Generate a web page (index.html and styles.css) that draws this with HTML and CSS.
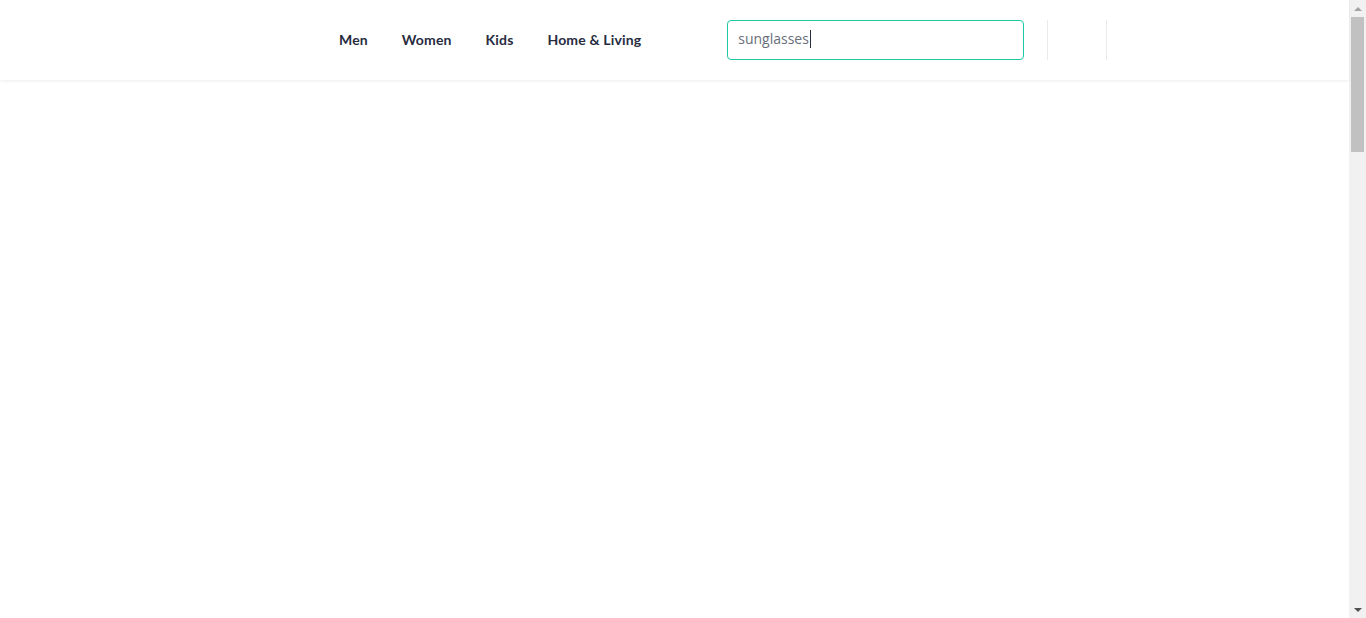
FILE: index.html
```html
<!DOCTYPE html>
<html lang="en">
<head>
<meta charset="utf-8">
<title>Search</title>
<link rel="stylesheet" href="styles.css">
</head>
<body>
<div class="page">
  <header class="site-header">
    <nav class="main-nav">
      <a class="nav-link" href="#">Men</a>
      <a class="nav-link" href="#">Women</a>
      <a class="nav-link" href="#">Kids</a>
      <a class="nav-link" href="#">Home &amp; Living</a>
    </nav>
    <div class="search-box" role="searchbox"><span class="search-text">sunglasses</span><span class="caret"></span></div>
    <div class="actions">
      <span class="divider"></span>
      <span class="action-slot"></span>
      <span class="divider"></span>
    </div>
  </header>
  <main class="page-body"></main>
</div>
<div class="scrollbar" aria-hidden="true">
  <div class="sb-button"><span class="arrow-up"></span></div>
  <div class="sb-track"><div class="sb-thumb"></div></div>
  <div class="sb-button"><span class="arrow-down"></span></div>
</div>
</body>
</html>
```

FILE: styles.css
```css
* { box-sizing: border-box; }

html, body {
  margin: 0;
  padding: 0;
  background: #ffffff;
  height: 100%;
  overflow: hidden;
}

body {
  display: flex;
  font-family: "Lato", "Liberation Sans", sans-serif;
  color: #282c3f;
}

.page {
  flex: 1;
  min-width: 0;
  height: 100vh;
}

.site-header {
  height: 80px;
  display: flex;
  align-items: center;
  padding-left: 322px;
  background: #ffffff;
  box-shadow: 0 1px 3px 0 rgba(0, 0, 0, 0.07);
  position: relative;
  z-index: 1;
}

.main-nav {
  display: flex;
  align-items: center;
  height: 80px;
}

.nav-link {
  padding: 0 17px;
  font-size: 14px;
  font-weight: 700;
  letter-spacing: 0.15px;
  color: #282c3f;
  text-decoration: none;
  line-height: 80px;
}

.search-box {
  margin-left: 69px;
  width: 297px;
  height: 40px;
  border: 1px solid #20c9a6;
  border-radius: 4px;
  display: flex;
  align-items: center;
  padding: 0 0 3px 10px;
  font-family: "Open Sans", "Noto Sans", sans-serif;
  font-size: 14px;
  color: #696e79;
}

.caret {
  width: 1px;
  height: 18px;
  background: #282c3f;
  margin-left: 1px;
}

.actions {
  display: flex;
  align-items: center;
  margin-left: 23px;
}

.divider {
  width: 1px;
  height: 40px;
  background: #eaeaec;
}

.action-slot {
  width: 58px;
}

.page-body {
  height: 538px;
}

/* drawn page scrollbar */
.scrollbar {
  width: 17px;
  height: 100vh;
  flex: none;
  display: flex;
  flex-direction: column;
  background: #f1f1f1;
}

.sb-button {
  height: 17px;
  flex: none;
  display: flex;
  align-items: center;
  justify-content: center;
}

.arrow-up {
  width: 0;
  height: 0;
  border-left: 4px solid transparent;
  border-right: 4px solid transparent;
  border-bottom: 4px solid #a3a3a3;
}

.arrow-down {
  width: 0;
  height: 0;
  border-left: 4px solid transparent;
  border-right: 4px solid transparent;
  border-top: 4px solid #505050;
}

.sb-track {
  flex: 1;
  padding: 0 2px;
}

.sb-thumb {
  height: 135px;
  background: #c1c1c1;
}
```
